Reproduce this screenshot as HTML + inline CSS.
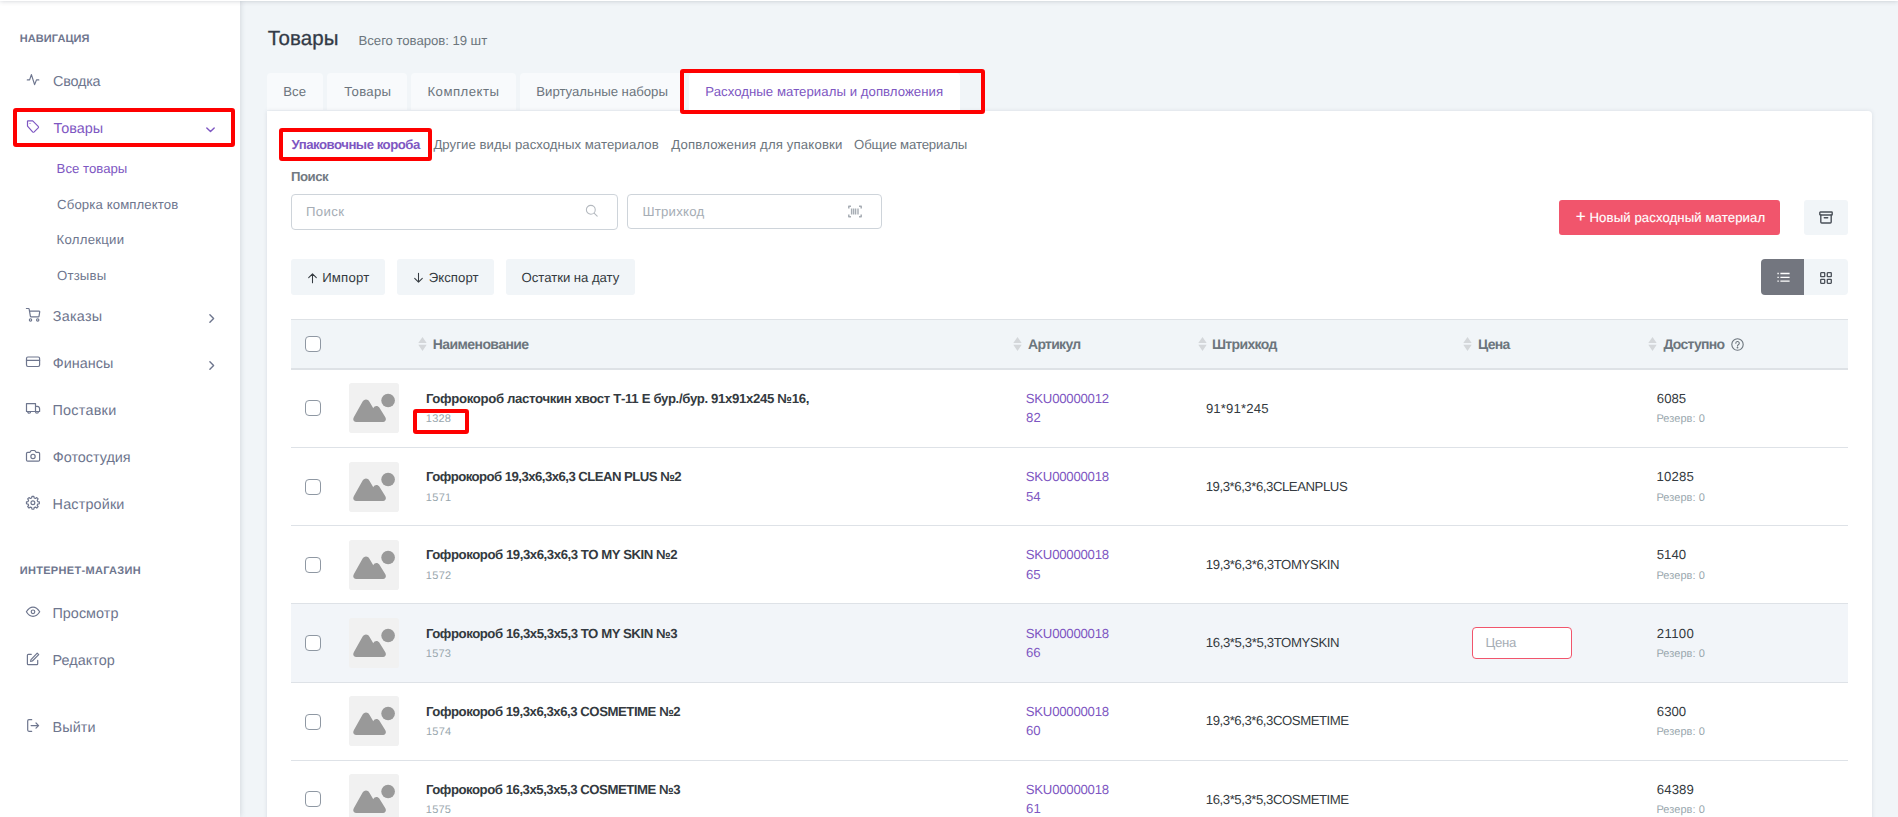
<!DOCTYPE html>
<html lang="ru">
<head>
<meta charset="utf-8">
<title>Товары</title>
<style>
*{box-sizing:border-box;margin:0;padding:0}
html,body{width:1898px;height:817px;overflow:hidden}
body{font-family:"Liberation Sans",sans-serif;background:#f1f5f8;color:#343a40;position:relative;font-size:13.2px;text-rendering:geometricPrecision}
.abs{position:absolute}
.t{position:absolute;white-space:nowrap;line-height:1;z-index:10}
.ic{position:absolute;fill:none;stroke:#6e768e;stroke-width:1.7;stroke-linecap:round;stroke-linejoin:round;z-index:10;overflow:visible}
.redbox{position:absolute;border:4px solid #fe0000;border-radius:3px;z-index:30}
.cb{position:absolute;width:16px;height:16px;border:1px solid #8f98a3;border-radius:4px;background:#fff;z-index:10}
.img{position:absolute;width:50px;height:50px;z-index:10}
.sort{position:absolute;width:9px;height:14px;z-index:10}
</style>
</head>
<body>

<div class="abs" style="left:0;top:-9px;width:1898px;height:10px;background:#fff;box-shadow:0 0 5px 0 rgba(60,70,90,.26);z-index:20"></div>
<div class="abs" style="left:0px;top:0px;width:240px;height:817px;background:#fff;box-shadow:0 0 6px 0 rgba(60,70,90,.2);z-index:5"></div>
<div class="abs" style="left:267px;top:110.6px;width:1605px;height:720px;background:#fff;border-radius:0 4px 0 0;box-shadow:0 0 4px rgba(120,130,150,.2);z-index:1"></div>
<div class="abs" style="left:267px;top:73px;width:55.5px;height:37.3px;background:#f8fafc;border-radius:4px 4px 0 0;z-index:0"></div>
<div class="abs" style="left:327px;top:73px;width:80px;height:37.3px;background:#f8fafc;border-radius:4px 4px 0 0;z-index:0"></div>
<div class="abs" style="left:411px;top:73px;width:104.5px;height:37.3px;background:#f8fafc;border-radius:4px 4px 0 0;z-index:0"></div>
<div class="abs" style="left:520px;top:73px;width:164.5px;height:37.3px;background:#f8fafc;border-radius:4px 4px 0 0;z-index:0"></div>
<div class="abs" style="left:689px;top:73px;width:271px;height:39px;background:#fff;border-radius:4px 4px 0 0;z-index:2"></div>
<div class="abs" style="left:291px;top:194.2px;width:326.7px;height:35.4px;background:#fff;border:1px solid #ced4da;border-radius:4px;z-index:3"></div>
<div class="abs" style="left:627px;top:194.1px;width:254.5px;height:34.7px;background:#fff;border:1px solid #ced4da;border-radius:4px;z-index:3"></div>
<svg class="ic" style="left:585.3px;top:203.6px;width:13.3px;height:13.3px;stroke:#b4b9bf;stroke-width:1.9" viewBox="0 0 24 24"><circle cx="10.5" cy="10.5" r="8"/><line x1="22" y1="22" x2="16.4" y2="16.4"/></svg>
<svg class="ic" style="left:848px;top:205px;width:14px;height:13px;stroke:#a7adb4;stroke-width:1.5;stroke-linecap:butt" viewBox="0 0 14 13"><path d="M0.8 3.5V1.2H3M11 1.2H13.2V3.5M13.2 9.5V11.8H11M3 11.8H0.8V9.5"/><path d="M3.6 3.6V9.4M5.6 3.6V9.4M7.6 3.6V9.4M10 3.6V9.4" stroke-width="1.4"/></svg>
<div class="abs" style="left:1559px;top:200px;width:221px;height:35px;background:#f1556c;border-radius:3px;z-index:3"></div>
<div class="abs" style="left:1804px;top:200px;width:44px;height:35px;background:#f1f5f8;border-radius:3px;z-index:3"></div>
<svg class="ic" style="left:1819px;top:211px;width:14px;height:13px;stroke:#4a5058;stroke-width:1.4" viewBox="0 0 14 13"><rect x="0.8" y="1" width="12.4" height="3" rx="0.6"/><path d="M1.8 4V11a1 1 0 0 0 1 1H11.2a1 1 0 0 0 1-1V4"/><line x1="5.3" y1="6.8" x2="8.7" y2="6.8"/></svg>
<div class="abs" style="left:291px;top:259.2px;width:94px;height:35.8px;background:#f1f5f8;border-radius:3px;z-index:3"></div>
<div class="abs" style="left:397.3px;top:259.2px;width:96.7px;height:35.8px;background:#f1f5f8;border-radius:3px;z-index:3"></div>
<div class="abs" style="left:506.3px;top:259.2px;width:129px;height:35.8px;background:#f1f5f8;border-radius:3px;z-index:3"></div>
<svg class="ic" style="left:308.3px;top:272.5px;width:9px;height:10px;stroke:#343a40;stroke-width:1.05" viewBox="0 0 9 10"><path d="M4.5 9.7V0.9M0.7 4.7L4.5 0.9L8.3 4.700"/></svg>
<svg class="ic" style="left:414.3px;top:272.5px;width:9px;height:10px;stroke:#343a40;stroke-width:1.05" viewBox="0 0 9 10"><path d="M4.5 0.3V9.1M0.7 5.3L4.5 9.1L8.3 5.300"/></svg>
<div class="abs" style="left:1761px;top:259px;width:43px;height:36px;background:#73767f;border-radius:4px 0 0 4px;z-index:3"></div>
<div class="abs" style="left:1804px;top:259px;width:44px;height:36px;background:#f1f5f8;border-radius:0 4px 4px 0;z-index:3"></div>
<svg class="ic" style="left:1777px;top:271.5px;width:13px;height:11px;stroke:#fff;stroke-width:1.3;stroke-linecap:butt" viewBox="0 0 13 11"><path d="M3.4 1.5H12.6M3.4 5.3H12.6M3.4 9.1H12.6"/><path d="M0.4 1.5H1.8M0.4 5.3H1.8M0.4 9.1H1.8"/></svg>
<svg class="ic" style="left:1820px;top:271.5px;width:12px;height:12px;stroke:#4a5058;stroke-width:1.3;stroke-linejoin:miter" viewBox="0 0 12 12"><rect x="0.7" y="0.7" width="4" height="4" rx=".5"/><rect x="7.3" y="0.7" width="4" height="4" rx=".5"/><rect x="0.7" y="7.3" width="4" height="4" rx=".5"/><rect x="7.3" y="7.3" width="4" height="4" rx=".5"/></svg>
<div class="abs" style="left:291px;top:319px;width:1557px;height:51px;background:#f1f5f8;border-top:1px solid #dee2e6;border-bottom:2px solid #dee2e6;z-index:3"></div>
<div class="cb" style="left:305px;top:336px"></div>
<svg class="sort" style="left:418px;top:337.4px" viewBox="0 0 9 14"><path d="M4.5 0L8.7 6H0.3Z M4.5 14L8.7 7.8H0.3Z" fill="#d4d7da"/></svg>
<svg class="sort" style="left:1013px;top:337.4px" viewBox="0 0 9 14"><path d="M4.5 0L8.7 6H0.3Z M4.5 14L8.7 7.8H0.3Z" fill="#d4d7da"/></svg>
<svg class="sort" style="left:1197.5px;top:337.4px" viewBox="0 0 9 14"><path d="M4.5 0L8.7 6H0.3Z M4.5 14L8.7 7.8H0.3Z" fill="#d4d7da"/></svg>
<svg class="sort" style="left:1463px;top:337.4px" viewBox="0 0 9 14"><path d="M4.5 0L8.7 6H0.3Z M4.5 14L8.7 7.8H0.3Z" fill="#d4d7da"/></svg>
<svg class="sort" style="left:1648px;top:337.4px" viewBox="0 0 9 14"><path d="M4.5 0L8.7 6H0.3Z M4.5 14L8.7 7.8H0.3Z" fill="#d4d7da"/></svg>
<svg class="ic" style="left:1730.5px;top:337.5px;width:13px;height:13px;stroke:#6c757d;stroke-width:1.1" viewBox="0 0 13 13"><circle cx="6.5" cy="6.5" r="5.7"/><path d="M4.8 5.2a1.75 1.75 0 1 1 2.6 1.55c-.6.35-.9.6-.9 1.25" /><circle cx="6.5" cy="9.6" r=".35" fill="#6c757d"/></svg>
<div class="cb" style="left:305px;top:400.20px"></div>
<svg class="img" style="left:349px;top:383.00px" viewBox="0 0 50 50"><rect width="50" height="50" rx="2.800" fill="#f1f1f1"/><path d="M8.6 39.1C4.5 39.1 3.2 36.8 5.2 33.4L13.2 19.2C15 16 18.6 15.600 20.600 19L24.300 25.300C25.300 22.500 28.800 22 30.300 24.600L36.200 34C37.800 36.800 36.500 39.100 33.200 39.100Z" fill="#999"/><circle cx="39.100" cy="17.550" r="6.800" fill="#999"/></svg>
<div class="abs" style="left:291px;top:447px;width:1557px;height:1px;background:#dee2e7;z-index:3"></div>
<div class="cb" style="left:305px;top:479.10px"></div>
<svg class="img" style="left:349px;top:461.90px" viewBox="0 0 50 50"><rect width="50" height="50" rx="2.800" fill="#f1f1f1"/><path d="M8.6 39.1C4.5 39.1 3.2 36.8 5.2 33.4L13.2 19.2C15 16 18.6 15.600 20.600 19L24.300 25.300C25.300 22.500 28.800 22 30.300 24.600L36.200 34C37.800 36.800 36.500 39.100 33.200 39.100Z" fill="#999"/><circle cx="39.100" cy="17.550" r="6.800" fill="#999"/></svg>
<div class="abs" style="left:291px;top:525px;width:1557px;height:1px;background:#dee2e7;z-index:3"></div>
<div class="cb" style="left:305px;top:557.40px"></div>
<svg class="img" style="left:349px;top:540.20px" viewBox="0 0 50 50"><rect width="50" height="50" rx="2.800" fill="#f1f1f1"/><path d="M8.6 39.1C4.5 39.1 3.2 36.8 5.2 33.4L13.2 19.2C15 16 18.6 15.600 20.600 19L24.300 25.300C25.300 22.500 28.800 22 30.300 24.600L36.200 34C37.800 36.800 36.500 39.100 33.200 39.100Z" fill="#999"/><circle cx="39.100" cy="17.550" r="6.800" fill="#999"/></svg>
<div class="abs" style="left:291px;top:604px;width:1557px;height:78px;background:#f2f5f9;z-index:2"></div>
<div class="abs" style="left:291px;top:603px;width:1557px;height:1px;background:#dee2e7;z-index:3"></div>
<div class="cb" style="left:305px;top:635.20px"></div>
<svg class="img" style="left:349px;top:618.00px" viewBox="0 0 50 50"><rect width="50" height="50" rx="2.800" fill="#f1f1f1"/><path d="M8.6 39.1C4.5 39.1 3.2 36.8 5.2 33.4L13.2 19.2C15 16 18.6 15.600 20.600 19L24.300 25.300C25.300 22.500 28.800 22 30.300 24.600L36.200 34C37.800 36.800 36.500 39.100 33.200 39.100Z" fill="#999"/><circle cx="39.100" cy="17.550" r="6.800" fill="#999"/></svg>
<div class="abs" style="left:291px;top:682px;width:1557px;height:1px;background:#dee2e7;z-index:3"></div>
<div class="cb" style="left:305px;top:713.60px"></div>
<svg class="img" style="left:349px;top:696.40px" viewBox="0 0 50 50"><rect width="50" height="50" rx="2.800" fill="#f1f1f1"/><path d="M8.6 39.1C4.5 39.1 3.2 36.8 5.2 33.4L13.2 19.2C15 16 18.6 15.600 20.600 19L24.300 25.300C25.300 22.500 28.800 22 30.300 24.600L36.200 34C37.800 36.800 36.500 39.100 33.200 39.100Z" fill="#999"/><circle cx="39.100" cy="17.550" r="6.800" fill="#999"/></svg>
<div class="abs" style="left:291px;top:760px;width:1557px;height:1px;background:#dee2e7;z-index:3"></div>
<div class="cb" style="left:305px;top:791.40px"></div>
<svg class="img" style="left:349px;top:774.20px" viewBox="0 0 50 50"><rect width="50" height="50" rx="2.800" fill="#f1f1f1"/><path d="M8.6 39.1C4.5 39.1 3.2 36.8 5.2 33.4L13.2 19.2C15 16 18.6 15.600 20.600 19L24.300 25.300C25.300 22.500 28.800 22 30.300 24.600L36.200 34C37.800 36.800 36.500 39.100 33.200 39.100Z" fill="#999"/><circle cx="39.100" cy="17.550" r="6.800" fill="#999"/></svg>
<div class="abs" style="left:1472px;top:627px;width:100px;height:32px;background:#fff;border:1px solid #f1556c;border-radius:4px;z-index:4"></div>
<svg class="ic" style="left:0;top:0;width:240px;height:817px;stroke-width:1.2" viewBox="0 0 240 817"><path d="M27.3 79.9H29.6L31.4 74.6L34.6 84.6L36.5 79.9H38.8"/><path stroke="#7e57c2" d="M27.5 121.3V126.1L32.6 131.9Q33.4 132.6 34.2 131.9L38.2 127.9Q38.9 127.1 38.2 126.3L32.7 120.800H28Q27.5 120.800 27.5 121.300Z"/><circle cx="30" cy="123.500" r=".55" fill="#7e57c2" stroke="none"/><path d="M26.4 308.500H28.4Q29.100 308.500 29.200 309.300L30.400 316.400Q30.500 316.900 31.100 316.900H38.300Q38.900 316.900 39 316.300L39.700 311.800Q39.800 311.200 39.200 311.200H29.600"/><circle cx="30.500" cy="319.900" r="1.150"/><circle cx="37.700" cy="319.900" r="1.150"/><rect x="26.500" y="357" width="13.100" height="9.500" rx="1.400"/><path d="M26.500 360.400H39.600"/><path d="M26.500 403.600H35.500V411.500H26.500ZM35.500 406.300H37.300Q39.600 406.600 39.600 408.800V411.500H35.500"/><path d="M27.700 411.700A1.450 1.450 0 0 0 30.600 411.700M35.500 411.700A1.450 1.450 0 0 0 38.400 411.700"/><path d="M27.700 452.300H30L30.900 450.900Q31.100 450.500 31.600 450.500H34.400Q34.900 450.500 35.100 450.900L36 452.300H38.400Q39.600 452.300 39.600 453.500V459.900Q39.600 461.100 38.400 461.100H27.700Q26.500 461.100 26.500 459.900V453.500Q26.500 452.300 27.700 452.300Z"/><circle cx="33" cy="456.400" r="2.150"/><path d="M31.65 497.96L31.94 496.37L33.86 496.37L34.15 497.96L35.44 498.49L36.77 497.57L38.13 498.93L37.21 500.26L37.74 501.55L39.33 501.84L39.33 503.76L37.74 504.05L37.21 505.34L38.13 506.67L36.77 508.03L35.44 507.11L34.15 507.64L33.86 509.23L31.94 509.23L31.65 507.64L30.36 507.11L29.03 508.03L27.67 506.67L28.59 505.34L28.06 504.05L26.47 503.76L26.47 501.84L28.06 501.55L28.59 500.26L27.67 498.93L29.03 497.57L30.36 498.49Z"/><circle cx="32.900" cy="502.800" r="1.900"/><path d="M26.400 611.800Q29.300 607.100 33 607.100T39.700 611.800Q36.800 616.400 33 616.400T26.400 611.800Z"/><circle cx="33" cy="611.800" r="1.800"/><path d="M31.300 654.300H28.300Q27.400 654.300 27.400 655.200V663.700Q27.400 664.600 28.300 664.600H36.800Q37.700 664.600 37.700 663.700V660.300"/><path d="M37.200 653.200L38.700 654.700L32.400 661L30.600 661.400L31 659.600Z"/><path d="M31.700 719.700H28.900Q27.700 719.700 27.700 720.900V730.100Q27.700 731.300 28.900 731.300H31.700"/><path d="M31.100 725.600H38.600M36 723L38.600 725.600L36 728.200"/></svg>
<svg class="ic" style="left:206px;top:127.3px;width:9px;height:6px;stroke:#7e57c2;stroke-width:1.4" viewBox="0 0 9 6"><polyline points="0.8 0.9 4.5 4.6 8.2 0.9"/></svg>
<svg class="ic" style="left:208.5px;top:314px;width:6px;height:9px;stroke-width:1.4" viewBox="0 0 6 9"><polyline points="0.9 0.8 4.6 4.5 0.9 8.2"/></svg>
<svg class="ic" style="left:208.5px;top:361px;width:6px;height:9px;stroke-width:1.4" viewBox="0 0 6 9"><polyline points="0.9 0.8 4.6 4.5 0.9 8.2"/></svg>
<div class="redbox" style="left:13px;top:108px;width:221.5px;height:38.5px;"></div>
<div class="redbox" style="left:680px;top:69px;width:304.5px;height:44.5px;"></div>
<div class="redbox" style="left:279px;top:127.5px;width:152.5px;height:33px;"></div>
<div class="redbox" style="left:413px;top:409px;width:56px;height:24.7px;"></div>

<span class="t" style="left:19.68px;top:34.00px;font-size:11px;color:#6e768e;font-weight:bold;letter-spacing:0.098px;">НАВИГАЦИЯ</span>
<span class="t" style="left:53.04px;top:74.80px;font-size:14.4px;color:#6e768e;letter-spacing:-0.206px;">Сводка</span>
<span class="t" style="left:53.50px;top:121.70px;font-size:14.4px;color:#7e57c2;letter-spacing:0.022px;">Товары</span>
<span class="t" style="left:56.58px;top:162.40px;font-size:13.2px;color:#7e57c2;letter-spacing:0.016px;">Все товары</span>
<span class="t" style="left:57.12px;top:197.70px;font-size:13.2px;color:#6e768e;letter-spacing:0.107px;">Сборка комплектов</span>
<span class="t" style="left:56.58px;top:233.00px;font-size:13.2px;color:#6e768e;letter-spacing:0.253px;">Коллекции</span>
<span class="t" style="left:56.99px;top:268.50px;font-size:13.2px;color:#6e768e;letter-spacing:0.180px;">Отзывы</span>
<span class="t" style="left:52.75px;top:309.80px;font-size:14.4px;color:#6e768e;letter-spacing:0.255px;">Заказы</span>
<span class="t" style="left:52.81px;top:356.70px;font-size:14.4px;color:#6e768e;letter-spacing:0.033px;">Финансы</span>
<span class="t" style="left:52.46px;top:403.60px;font-size:14.4px;color:#6e768e;letter-spacing:0.253px;">Поставки</span>
<span class="t" style="left:52.81px;top:450.60px;font-size:14.4px;color:#6e768e;letter-spacing:-0.016px;">Фотостудия</span>
<span class="t" style="left:52.61px;top:497.60px;font-size:14.4px;color:#6e768e;letter-spacing:0.154px;">Настройки</span>
<span class="t" style="left:19.68px;top:565.60px;font-size:11px;color:#6e768e;font-weight:bold;letter-spacing:0.319px;">ИНТЕРНЕТ-МАГАЗИН</span>
<span class="t" style="left:52.46px;top:607.00px;font-size:14.4px;color:#6e768e;letter-spacing:0.030px;">Просмотр</span>
<span class="t" style="left:52.46px;top:653.90px;font-size:14.4px;color:#6e768e;letter-spacing:0.050px;">Редактор</span>
<span class="t" style="left:52.61px;top:721.00px;font-size:14.4px;color:#6e768e;letter-spacing:0.075px;">Выйти</span>
<span class="t" style="left:267.67px;top:29.00px;font-size:20.5px;color:#323a46;letter-spacing:0.045px;-webkit-text-stroke:0.3px #323a46;">Товары</span>
<span class="t" style="left:358.58px;top:34.00px;font-size:13.2px;color:#6c757d;letter-spacing:-0.053px;">Всего товаров: 19 шт</span>
<span class="t" style="left:283.13px;top:85.00px;font-size:13.2px;color:#6c757d;letter-spacing:0.156px;">Все</span>
<span class="t" style="left:344.24px;top:85.00px;font-size:13.2px;color:#6c757d;letter-spacing:0.295px;">Товары</span>
<span class="t" style="left:427.42px;top:85.00px;font-size:13.2px;color:#6c757d;letter-spacing:0.489px;">Комплекты</span>
<span class="t" style="left:536.28px;top:85.00px;font-size:13.2px;color:#6c757d;letter-spacing:-0.013px;">Виртуальные наборы</span>
<span class="t" style="left:705.22px;top:85.00px;font-size:13.2px;color:#7e57c2;letter-spacing:0.050px;">Расходные материалы и допвложения</span>
<span class="t" style="left:291.49px;top:137.80px;font-size:13.2px;color:#7e57c2;font-weight:bold;letter-spacing:-0.487px;">Упаковочные короба</span>
<span class="t" style="left:433.40px;top:137.80px;font-size:13.2px;color:#6c757d;letter-spacing:0.037px;">Другие виды расходных материалов</span>
<span class="t" style="left:671.33px;top:137.80px;font-size:13.2px;color:#6c757d;letter-spacing:0.151px;">Допвложения для упаковки</span>
<span class="t" style="left:854.10px;top:137.80px;font-size:13.2px;color:#6c757d;letter-spacing:-0.166px;">Общие материалы</span>
<span class="t" style="left:291.10px;top:169.80px;font-size:13.2px;color:#727a82;font-weight:bold;letter-spacing:-0.520px;">Поиск</span>
<span class="t" style="left:305.90px;top:205.00px;font-size:13.2px;color:#a6adb5;letter-spacing:0.385px;">Поиск</span>
<span class="t" style="left:642.48px;top:205.00px;font-size:13.2px;color:#a6adb5;letter-spacing:0.221px;">Штрихкод</span>
<span class="t" style="left:1575.73px;top:208.30px;font-size:17px;color:#fff;letter-spacing:-4.630px;-webkit-text-stroke:0.15px #fff;">+</span>
<span class="t" style="left:1589.52px;top:211.00px;font-size:13.2px;color:#fff;letter-spacing:0.084px;-webkit-text-stroke:0.12px #fff;">Новый расходный материал</span>
<span class="t" style="left:322.13px;top:271.30px;font-size:13.2px;color:#343a40;letter-spacing:0.189px;">Импорт</span>
<span class="t" style="left:428.64px;top:271.30px;font-size:13.2px;color:#343a40;letter-spacing:0.078px;">Экспорт</span>
<span class="t" style="left:521.60px;top:271.30px;font-size:13.2px;color:#343a40;letter-spacing:-0.050px;">Остатки на дату</span>
<span class="t" style="left:432.82px;top:337.00px;font-size:14px;color:#6c757d;font-weight:bold;letter-spacing:-0.587px;">Наименование</span>
<span class="t" style="left:1028.12px;top:337.00px;font-size:14px;color:#6c757d;font-weight:bold;letter-spacing:-0.733px;">Артикул</span>
<span class="t" style="left:1211.92px;top:337.00px;font-size:14px;color:#6c757d;font-weight:bold;letter-spacing:-0.653px;">Штрихкод</span>
<span class="t" style="left:1477.88px;top:337.00px;font-size:14px;color:#6c757d;font-weight:bold;letter-spacing:-0.640px;">Цена</span>
<span class="t" style="left:1663.38px;top:337.00px;font-size:14px;color:#6c757d;font-weight:bold;letter-spacing:-0.712px;">Доступно</span>
<span class="t" style="left:425.88px;top:392.00px;font-size:13.2px;color:#343a40;font-weight:bold;letter-spacing:-0.339px;">Гофрокороб ласточкин хвост Т-11 Е бур./бур. 91х91х245 №16,</span>
<span class="t" style="left:425.87px;top:414.00px;font-size:11px;color:#98a6ad;letter-spacing:0.217px;">1328</span>
<span class="t" style="left:1025.78px;top:392.00px;font-size:13.2px;color:#7e57c2;letter-spacing:-0.242px;">SKU00000012</span>
<span class="t" style="left:1025.93px;top:411.00px;font-size:13.2px;color:#7e57c2;letter-spacing:0.169px;">82</span>
<span class="t" style="left:1205.88px;top:402.00px;font-size:13.2px;color:#343a40;letter-spacing:0.146px;">91*91*245</span>
<span class="t" style="left:1656.85px;top:392.00px;font-size:13.2px;color:#343a40;letter-spacing:-0.025px;">6085</span>
<span class="t" style="left:1656.43px;top:414.00px;font-size:11px;color:#98a6ad;letter-spacing:0.053px;">Резерв: 0</span>
<span class="t" style="left:425.92px;top:470.00px;font-size:13.2px;color:#343a40;font-weight:bold;letter-spacing:-0.549px;">Гофрокороб 19,3х6,3х6,3 CLEAN PLUS №2</span>
<span class="t" style="left:425.86px;top:493.00px;font-size:11px;color:#98a6ad;letter-spacing:0.268px;">1571</span>
<span class="t" style="left:1025.78px;top:470.00px;font-size:13.2px;color:#7e57c2;letter-spacing:-0.244px;">SKU00000018</span>
<span class="t" style="left:1025.97px;top:490.00px;font-size:13.2px;color:#7e57c2;letter-spacing:-0.153px;">54</span>
<span class="t" style="left:1205.74px;top:480.00px;font-size:13.2px;color:#343a40;letter-spacing:-0.453px;">19,3*6,3*6,3CLEANPLUS</span>
<span class="t" style="left:1656.50px;top:470.00px;font-size:13.2px;color:#343a40;letter-spacing:0.170px;">10285</span>
<span class="t" style="left:1656.43px;top:493.00px;font-size:11px;color:#98a6ad;letter-spacing:0.053px;">Резерв: 0</span>
<span class="t" style="left:425.88px;top:548.00px;font-size:13.2px;color:#343a40;font-weight:bold;letter-spacing:-0.442px;">Гофрокороб 19,3х6,3х6,3 TO MY SKIN №2</span>
<span class="t" style="left:425.86px;top:571.00px;font-size:11px;color:#98a6ad;letter-spacing:0.273px;">1572</span>
<span class="t" style="left:1025.78px;top:548.00px;font-size:13.2px;color:#7e57c2;letter-spacing:-0.244px;">SKU00000018</span>
<span class="t" style="left:1026.08px;top:568.00px;font-size:13.2px;color:#7e57c2;letter-spacing:-0.073px;">65</span>
<span class="t" style="left:1205.74px;top:558.00px;font-size:13.2px;color:#343a40;letter-spacing:-0.387px;">19,3*6,3*6,3TOMYSKIN</span>
<span class="t" style="left:1656.67px;top:548.00px;font-size:13.2px;color:#343a40;letter-spacing:0.036px;">5140</span>
<span class="t" style="left:1656.43px;top:571.00px;font-size:11px;color:#98a6ad;letter-spacing:0.053px;">Резерв: 0</span>
<span class="t" style="left:425.88px;top:627.00px;font-size:13.2px;color:#343a40;font-weight:bold;letter-spacing:-0.447px;">Гофрокороб 16,3х5,3х5,3 TO MY SKIN №3</span>
<span class="t" style="left:425.87px;top:649.00px;font-size:11px;color:#98a6ad;letter-spacing:0.219px;">1573</span>
<span class="t" style="left:1025.78px;top:627.00px;font-size:13.2px;color:#7e57c2;letter-spacing:-0.244px;">SKU00000018</span>
<span class="t" style="left:1026.10px;top:646.00px;font-size:13.2px;color:#7e57c2;letter-spacing:-0.068px;">66</span>
<span class="t" style="left:1205.74px;top:636.00px;font-size:13.2px;color:#343a40;letter-spacing:-0.387px;">16,3*5,3*5,3TOMYSKIN</span>
<span class="t" style="left:1656.87px;top:627.00px;font-size:13.2px;color:#343a40;letter-spacing:0.315px;">21100</span>
<span class="t" style="left:1656.43px;top:649.00px;font-size:11px;color:#98a6ad;letter-spacing:0.053px;">Резерв: 0</span>
<span class="t" style="left:426.01px;top:705.00px;font-size:13.2px;color:#343a40;font-weight:bold;letter-spacing:-0.470px;">Гофрокороб 19,3х6,3х6,3 COSMETIME №2</span>
<span class="t" style="left:425.88px;top:727.00px;font-size:11px;color:#98a6ad;letter-spacing:0.278px;">1574</span>
<span class="t" style="left:1025.78px;top:705.00px;font-size:13.2px;color:#7e57c2;letter-spacing:-0.244px;">SKU00000018</span>
<span class="t" style="left:1026.10px;top:724.00px;font-size:13.2px;color:#7e57c2;letter-spacing:-0.189px;">60</span>
<span class="t" style="left:1205.83px;top:714.00px;font-size:13.2px;color:#343a40;letter-spacing:-0.457px;">19,3*6,3*6,3COSMETIME</span>
<span class="t" style="left:1656.86px;top:705.00px;font-size:13.2px;color:#343a40;letter-spacing:-0.050px;">6300</span>
<span class="t" style="left:1656.43px;top:727.00px;font-size:11px;color:#98a6ad;letter-spacing:0.053px;">Резерв: 0</span>
<span class="t" style="left:425.92px;top:783.00px;font-size:13.2px;color:#343a40;font-weight:bold;letter-spacing:-0.470px;">Гофрокороб 16,3х5,3х5,3 COSMETIME №3</span>
<span class="t" style="left:425.87px;top:805.00px;font-size:11px;color:#98a6ad;letter-spacing:0.210px;">1575</span>
<span class="t" style="left:1025.78px;top:783.00px;font-size:13.2px;color:#7e57c2;letter-spacing:-0.244px;">SKU00000018</span>
<span class="t" style="left:1025.99px;top:802.00px;font-size:13.2px;color:#7e57c2;letter-spacing:0.164px;">61</span>
<span class="t" style="left:1205.83px;top:793.00px;font-size:13.2px;color:#343a40;letter-spacing:-0.457px;">16,3*5,3*5,3COSMETIME</span>
<span class="t" style="left:1656.85px;top:783.00px;font-size:13.2px;color:#343a40;letter-spacing:0.088px;">64389</span>
<span class="t" style="left:1656.43px;top:805.00px;font-size:11px;color:#98a6ad;letter-spacing:0.053px;">Резерв: 0</span>
<span class="t" style="left:1485.47px;top:636.00px;font-size:13.2px;color:#a6adb5;letter-spacing:-0.291px;">Цена</span>
</body>
</html>
